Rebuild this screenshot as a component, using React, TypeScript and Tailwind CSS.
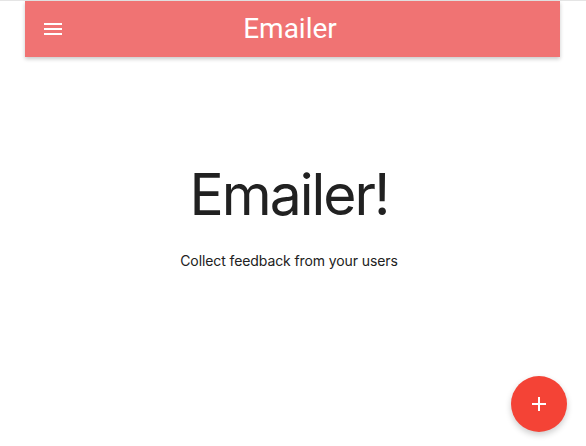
export default function App() {
  return (
    <div className="relative min-h-[446px] bg-white border-t border-[#e5e5e5] font-['Inter','Roboto',sans-serif] text-[#222]">
      <nav className="ml-[25px] w-[535px] h-[56px] bg-[#f07373] flex items-center relative shadow-[0_2px_4px_rgba(0,0,0,0.22)]">
        <button className="ml-[16px] w-[24px] h-[24px] flex items-center justify-center">
          <svg width="18" height="12" viewBox="0 0 18 12" fill="#fff">
            <rect x="0" y="0" width="18" height="2" />
            <rect x="0" y="5" width="18" height="2" />
            <rect x="0" y="10" width="18" height="2" />
          </svg>
        </button>
        <span className="absolute left-[265px] -translate-x-1/2 text-white text-[28px] font-['Roboto',sans-serif] leading-none">
          Emailer
        </span>
      </nav>

      <main className="flex flex-col items-center pt-[109px] pr-[8px]">
        <h1 className="text-[57px] leading-none font-normal tracking-[-2px] text-[#212121]">Emailer!</h1>
        <p className="mt-[27px] text-[14px] tracking-[-0.1px] text-[#212121]">Collect feedback from your users</p>
      </main>

      <button className="absolute left-[511px] top-[375px] w-[56px] h-[56px] rounded-full bg-[#f44336] flex items-center justify-center shadow-[0_3px_6px_rgba(0,0,0,0.2)]">
        <svg width="14" height="14" viewBox="0 0 14 14" fill="#fff">
          <rect x="6" y="0" width="2" height="14" />
          <rect x="0" y="6" width="14" height="2" />
        </svg>
      </button>
    </div>
  );
}
